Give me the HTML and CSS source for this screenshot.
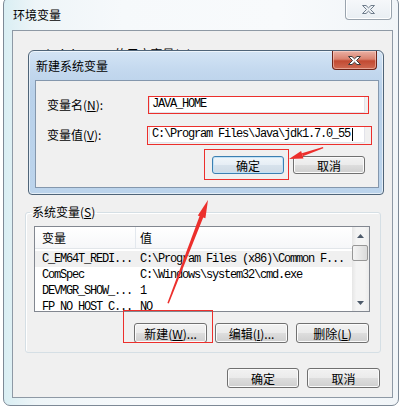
FILE: index.html
```html
<!DOCTYPE html>
<html lang="zh-CN">
<head>
<meta charset="utf-8">
<title>环境变量</title>
<link rel="stylesheet" href="styles.css">
</head>
<body>
<div class="desktop">
  <div class="window main-win">
    <div class="titlebar">
      <span class="title">环境变量</span>
      <div class="close-btn close-gray">
        <svg width="13" height="9" viewBox="0 0 13 9"><polygon points="0.5,0.5 4,0.5 6.5,2.8 9,0.5 12.5,0.5 8.5,4.5 12.5,8.5 9,8.5 6.5,6.2 4,8.5 0.5,8.5 4.5,4.5" fill="#eef2f6" stroke="#6f7d8c" stroke-width="1"/></svg>
      </div>
    </div>
    <div class="client main-client">
      <div class="user-area">
        <div class="user-label">Administrator 的用户变量(<u>U</u>)</div>
      </div>
      <fieldset class="group">
        <legend>系统变量(<u>S</u>)</legend>
        <div class="listview">
          <div class="lv-body">
            <div class="lv-header">
              <div class="col-name">变量</div>
              <div class="col-value">值</div>
            </div>
            <div class="lv-rows">
              <div class="lv-row hot"><div class="col-name">C_EM64T_REDI...</div><div class="col-value">C:\Program Files (x86)\Common F...</div></div>
              <div class="lv-row"><div class="col-name">ComSpec</div><div class="col-value">C:\Windows\system32\cmd.exe</div></div>
              <div class="lv-row"><div class="col-name">DEVMGR_SHOW_...</div><div class="col-value">1</div></div>
              <div class="lv-row"><div class="col-name">FP_NO_HOST_C...</div><div class="col-value">NO</div></div>
            </div>
          </div>
          <div class="scrollbar">
            <div class="sb-arrow"><svg width="7" height="4" viewBox="0 0 7 4"><polygon points="3.5,0 7,4 0,4" fill="#4d5a6a"/></svg></div>
            <div class="sb-thumb"></div>
            <div class="sb-track"></div>
            <div class="sb-arrow"><svg width="7" height="4" viewBox="0 0 7 4"><polygon points="0,0 7,0 3.5,4" fill="#4d5a6a"/></svg></div>
          </div>
        </div>
        <div class="btn-row group-btns">
          <button class="btn">新建(<u>W</u>)...</button>
          <button class="btn">编辑(<u>I</u>)...</button>
          <button class="btn">删除(<u>L</u>)</button>
        </div>
      </fieldset>
      <div class="btn-row footer">
        <button class="btn w72">确定</button>
        <button class="btn">取消</button>
      </div>
    </div>
  </div>

  <div class="window dialog">
    <div class="titlebar dlg-titlebar">
      <span class="title dlg-title">新建系统变量</span>
      <div class="close-btn close-red">
        <svg width="13" height="9" viewBox="0 0 13 9"><polygon points="0.5,0.5 4,0.5 6.5,2.8 9,0.5 12.5,0.5 8.5,4.5 12.5,8.5 9,8.5 6.5,6.2 4,8.5 0.5,8.5 4.5,4.5" fill="#ffffff" stroke="#3c3c3c" stroke-width="1"/></svg>
      </div>
    </div>
    <div class="client dlg-client">
      <div class="field-row first">
        <label class="field-label">变量名(<u>N</u>):</label>
        <div class="textbox">JAVA_HOME</div>
      </div>
      <div class="field-row">
        <label class="field-label">变量值(<u>V</u>):</label>
        <div class="textbox">C:\Program Files\Java\jdk1.7.0_55<span class="caret"></span></div>
      </div>
      <div class="btn-row dlg-btns">
        <button class="btn btn-default">确定</button>
        <button class="btn">取消</button>
      </div>
    </div>
  </div>

  <svg class="annotations" width="403" height="410" viewBox="0 0 403 410">
    <g fill="none" stroke="#ec2f2c" stroke-width="1">
      <rect x="148.5" y="99.5" width="220" height="17"/>
      <rect x="147.5" y="129.5" width="224" height="18"/>
      <rect x="204.5" y="152.5" width="84" height="30"/>
      <rect x="123.5" y="313.5" width="89" height="32"/>
    </g>
    <polygon points="167.4,306 168.8,306.4 203.5,219.8 199.8,218.5" fill="#ec2f2c"/>
    <polygon points="208,203 205.4,221.3 197.8,218.4" fill="#ec2f2c"/>
    <polygon points="323,150 323.3,151.2 302.8,159.2 301.8,156.2" fill="#ec2f2c"/>
    <polygon points="289,162 301.1,153.9 303.5,161.5" fill="#ec2f2c"/>
  </svg>
</div>
</body>
</html>
```

FILE: styles.css
```css
* {
  box-sizing: border-box;
}

html,
body {
  margin: 0;
  padding: 0;
}

body {
  width: 403px;
  height: 410px;
  overflow: hidden;
  background: #ffffff;
  font-family: "Noto Sans CJK SC", "Noto Sans", sans-serif;
  font-size: 12px;
  color: #000;
}

.desktop {
  position: relative;
  width: 403px;
  height: 410px;
}

u {
  text-decoration: underline;
}

/* ---------- windows ---------- */
.window {
  display: flex;
  flex-direction: column;
}

.main-win {
  margin: -3px 0 0 3px;
  width: 396px;
  height: 409px;
  border: 1px solid #7d8996;
  border-radius: 7px;
  padding: 0 5px 0 8px;
  background: linear-gradient(90deg, #d9eef3 0, #eef5f8 8%, #f6f9fb 30%, #f8fafc 70%, #f1f5f8 100%);
}

.titlebar {
  display: flex;
  justify-content: space-between;
  align-items: flex-start;
  height: 32px;
  flex: none;
}

.title {
  margin: 10px 0 0 1px;
  line-height: 14px;
  font-size: 12px;
  color: #000;
}

.close-btn {
  display: flex;
  align-items: center;
  justify-content: center;
}

.close-gray {
  width: 47px;
  height: 22px;
  margin-right: 1px;
  border: 1px solid #9aa4ae;
  border-top: none;
  border-radius: 0 0 4px 4px;
  background: linear-gradient(#f7f9fb, #e9eef3);
  box-shadow: inset 0 0 0 1px #ffffff;
  padding-top: 1px;
}

.client {
  border: 1px solid #8e99a5;
  background: #f0f0f0;
}

.main-client {
  height: 368px;
  flex: none;
}

.user-area {
  height: 174px;
  padding: 16px 0 0 22px;
}

.user-label {
  line-height: 14px;
}

/* ---------- group box ---------- */
.group {
  margin: 0 0 0 12px;
  width: 356px;
  height: 148px;
  border: 1px solid #d5dfe5;
  border-radius: 3px;
  padding: 7px 8px 9px 8px;
  box-shadow: inset 1px 1px 0 #ffffff;
}

.group legend {
  margin-left: -4px;
  padding: 0 2px;
  line-height: 14px;
  font-size: 12px;
}

/* ---------- list view ---------- */
.listview {
  display: flex;
  width: 336px;
  height: 86px;
  border: 1px solid #828790;
  background: #ffffff;
}

.lv-body {
  width: 317px;
  overflow: hidden;
}

.lv-header {
  display: flex;
  height: 22px;
  border-bottom: 1px solid #e2e6ea;
  background: linear-gradient(#ffffff, #f6f7f9);
}

.lv-header .col-name,
.lv-header .col-value {
  line-height: 21px;
  font-size: 12px;
}

.col-name {
  width: 101px;
  padding-left: 7px;
  flex: none;
  white-space: nowrap;
}

.lv-header .col-name {
  border-right: 1px solid #e3e8ee;
}

.col-value {
  padding-left: 4px;
  white-space: nowrap;
}

.lv-rows {
  padding-top: 2px;
}

.lv-row {
  display: flex;
  height: 16px;
  font-family: "Liberation Mono", monospace;
  font-size: 12px;
  letter-spacing: -1.2px;
  line-height: 16px;
}

.lv-row.hot {
  background: #f0f0f0;
}

.scrollbar {
  width: 17px;
  display: flex;
  flex-direction: column;
  background: linear-gradient(90deg, #e6e6e6, #f4f4f4 25%, #f4f4f4 75%, #ebebeb);
}

.sb-arrow {
  height: 17px;
  display: flex;
  align-items: center;
  justify-content: center;
  flex: none;
}

.sb-thumb {
  height: 16px;
  margin: 1px 1px 0 0;
  border: 1px solid #979797;
  border-radius: 2px;
  background: linear-gradient(90deg, #f4f4f4, #e8e8e8 50%, #dadada);
  flex: none;
}

.sb-track {
  flex: 1;
}

/* ---------- buttons ---------- */
.btn-row {
  display: flex;
}

.group-btns {
  margin-top: 11px;
  padding-left: 100px;
  gap: 8px;
}

.footer {
  margin-top: 15px;
  justify-content: flex-end;
  gap: 8px;
  padding-right: 12px;
}

.btn {
  width: 73px;
  height: 20px;
  padding: 0;
  border: 1px solid #707070;
  border-radius: 3px;
  background: linear-gradient(#f2f2f2 0, #ebebeb 48%, #dddddd 52%, #cfcfcf 100%);
  box-shadow: inset 0 0 0 1px #fbfbfb;
  font-family: "Noto Sans CJK SC", "Noto Sans", sans-serif;
  font-size: 12px;
  line-height: 17px;
  color: #000;
  text-align: center;
  white-space: nowrap;
}

.btn.w72 {
  width: 72px;
}

/* ---------- dialog ---------- */
.dialog {
  position: absolute;
  left: 28px;
  top: 53px;
  width: 356px;
  height: 145px;
  border: 1px solid #4f6478;
  border-radius: 6px 6px 4px 4px;
  padding: 0 4px 6px 6px;
  background: linear-gradient(180deg, #d3e4f5 0, #c3d8ee 20px, #b9d1ea 40px, #bcd4ec 100%);
  box-shadow: inset 0 0 0 1px rgba(255, 255, 255, 0.6);
}

.dlg-titlebar {
  height: 29px;
}

.dlg-title {
  margin: 8px 0 0 1px;
}

.close-red {
  width: 45px;
  height: 19px;
  margin-right: 2px;
  border: 1px solid #6d2419;
  border-top: none;
  border-radius: 0 0 4px 4px;
  background: linear-gradient(#eab1a5 0, #d9826f 45%, #c24a32 55%, #cf6a53 100%);
  box-shadow: inset 0 0 0 1px rgba(255, 220, 210, 0.5);
}

.dlg-client {
  height: 108px;
  flex: none;
  border-color: #8497ad;
  padding: 15px 13px 0 11px;
}

.field-row {
  display: flex;
  align-items: center;
  height: 17px;
  margin-bottom: 13px;
}

.field-label {
  width: 102px;
  flex: none;
  line-height: 14px;
}

.textbox {
  width: 218px;
  height: 17px;
  border: 1px solid #e2e3ea;
  border-top-color: #abadb3;
  background: #ffffff;
  padding-left: 2px;
  font-family: "Liberation Mono", monospace;
  font-size: 12px;
  letter-spacing: -1.2px;
  line-height: 15px;
  white-space: nowrap;
  display: flex;
  align-items: center;
}

.caret {
  display: inline-block;
  width: 1px;
  height: 13px;
  margin-left: 2px;
  background: #000;
}

.dlg-btns {
  margin-top: 1px;
  justify-content: flex-end;
  gap: 9px;
}

.dlg-btns .btn {
  width: 72px;
  height: 18px;
  line-height: 15px;
}

.btn-default {
  border-color: #3c7fb1;
  background: linear-gradient(#f1f6fa 0, #e6eef5 48%, #d7e2ec 52%, #cfdbe6 100%);
  box-shadow: inset 0 0 0 1px #c2e2f6;
}

.annotations {
  position: absolute;
  left: 0;
  top: 0;
  pointer-events: none;
}
```
